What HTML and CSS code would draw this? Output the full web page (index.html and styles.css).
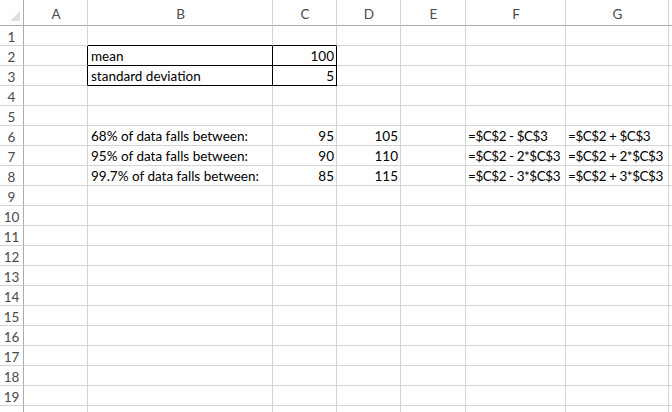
FILE: index.html
```html
<!DOCTYPE html>
<html lang="en">
<head>
  <meta charset="UTF-8">
  <title>Normal Distribution Ranges</title>
  <link rel="stylesheet" href="styles.css">
</head>
<body>

<table class="sheet">
  <colgroup>
    <col class="col-hdr">
    <col class="col-a">
    <col class="col-b">
    <col class="col-c">
    <col class="col-d">
    <col class="col-e">
    <col class="col-f">
    <col class="col-g">
    <col class="col-h">
  </colgroup>
  <thead>
    <tr id="colHeaders"></tr>
  </thead>
  <tbody id="sheetBody">
    <!-- Rows are built below -->
  </tbody>
</table>

<script>
const columns = ["A", "B", "C", "D", "E", "F", "G", "H"];
const rowCount = 20;

const mean = 100;
const sd = 5;

// Cell contents, keyed by address
const cells = {
  B2: "mean", C2: mean,
  B3: "standard deviation", C3: sd,
  B6: "68% of data falls between:", C6: mean - sd, D6: mean + sd,
  F6: "=$C$2 - $C$3", G6: "=$C$2 + $C$3",
  B7: "95% of data falls between:", C7: mean - 2 * sd, D7: mean + 2 * sd,
  F7: "=$C$2 - 2*$C$3", G7: "=$C$2 + 2*$C$3",
  B8: "99.7% of data falls between:", C8: mean - 3 * sd, D8: mean + 3 * sd,
  F8: "=$C$2 - 3*$C$3", G8: "=$C$2 + 3*$C$3"
};

// Thin black outline around B2:C3
function inBox(col, row) {
  return row >= 2 && row <= 3 && (col === "B" || col === "C");
}

const headerRow = document.getElementById("colHeaders");
const body = document.getElementById("sheetBody");

const corner = document.createElement("th");
corner.className = "corner";
headerRow.appendChild(corner);
columns.forEach(col => {
  const th = document.createElement("th");
  th.className = "col-head";
  th.textContent = col === "H" ? "" : col;
  headerRow.appendChild(th);
});

for (let r = 1; r <= rowCount; r++) {
  const tr = document.createElement("tr");
  const rowHead = document.createElement("th");
  rowHead.className = "row-head";
  rowHead.textContent = r;
  tr.appendChild(rowHead);

  columns.forEach((col, i) => {
    const td = document.createElement("td");
    const value = cells[col + r];
    if (value !== undefined) {
      td.textContent = value;
      if (typeof value === "number") td.classList.add("num");
      else if (value.startsWith("=")) td.classList.add("formula");
    }
    if (inBox(col, r)) td.classList.add("box-r", "box-b");
    if (inBox(columns[i + 1], r)) td.classList.add("box-r");
    if (inBox(col, r + 1)) td.classList.add("box-b");
    tr.appendChild(td);
  });

  body.appendChild(tr);
}
</script>

</body>
</html>
```

FILE: styles.css
```css
body {
  margin: 0;
  overflow: hidden;
  background: #fff;
  font-family: "Lato", "Liberation Sans", sans-serif;
  color: #000;
}

.sheet {
  border-collapse: separate;
  border-spacing: 0;
  table-layout: fixed;
  width: 700px;
}

.col-hdr { width: 24px; }
.col-a { width: 64px; }
.col-b { width: 185px; }
.col-c { width: 64px; }
.col-d { width: 64px; }
.col-e { width: 65px; }
.col-f { width: 100px; }
.col-g { width: 103px; }

.sheet th,
.sheet td {
  box-sizing: border-box;
  height: 20px;
  padding: 0 2px 0 3px;
  border-right: 1px solid #d4d4d4;
  border-bottom: 1px solid #d4d4d4;
  font-size: 13.5px;
  line-height: 17px;
  white-space: nowrap;
  text-align: left;
  vertical-align: bottom;
}

.sheet td.num {
  text-align: right;
  padding-right: 2px;
}

.sheet td.formula {
  padding-left: 2px;
  letter-spacing: -0.45px;
  overflow: hidden;
}

.sheet td.box-r { border-right-color: #000; }
.sheet td.box-b { border-bottom-color: #000; }

/* Headers */
.col-head,
.row-head,
.corner {
  font-weight: normal;
  color: #4a4a4a;
}

.sheet .col-head {
  height: 26px;
  padding-top: 3px;
  text-align: center;
  vertical-align: middle;
  border-bottom-color: #ababab;
}

.sheet .row-head {
  text-align: center;
  vertical-align: top;
  padding: 4px 0 0;
  line-height: 15px;
  border-right-color: #ababab;
}

.sheet .corner {
  position: relative;
  height: 26px;
  border-bottom-color: #ababab;
  border-right-color: #ababab;
}

.corner::after {
  content: "";
  position: absolute;
  right: 3px;
  bottom: 4px;
  border-style: solid;
  border-width: 0 0 10px 10px;
  border-color: transparent transparent #dedede transparent;
}
```
